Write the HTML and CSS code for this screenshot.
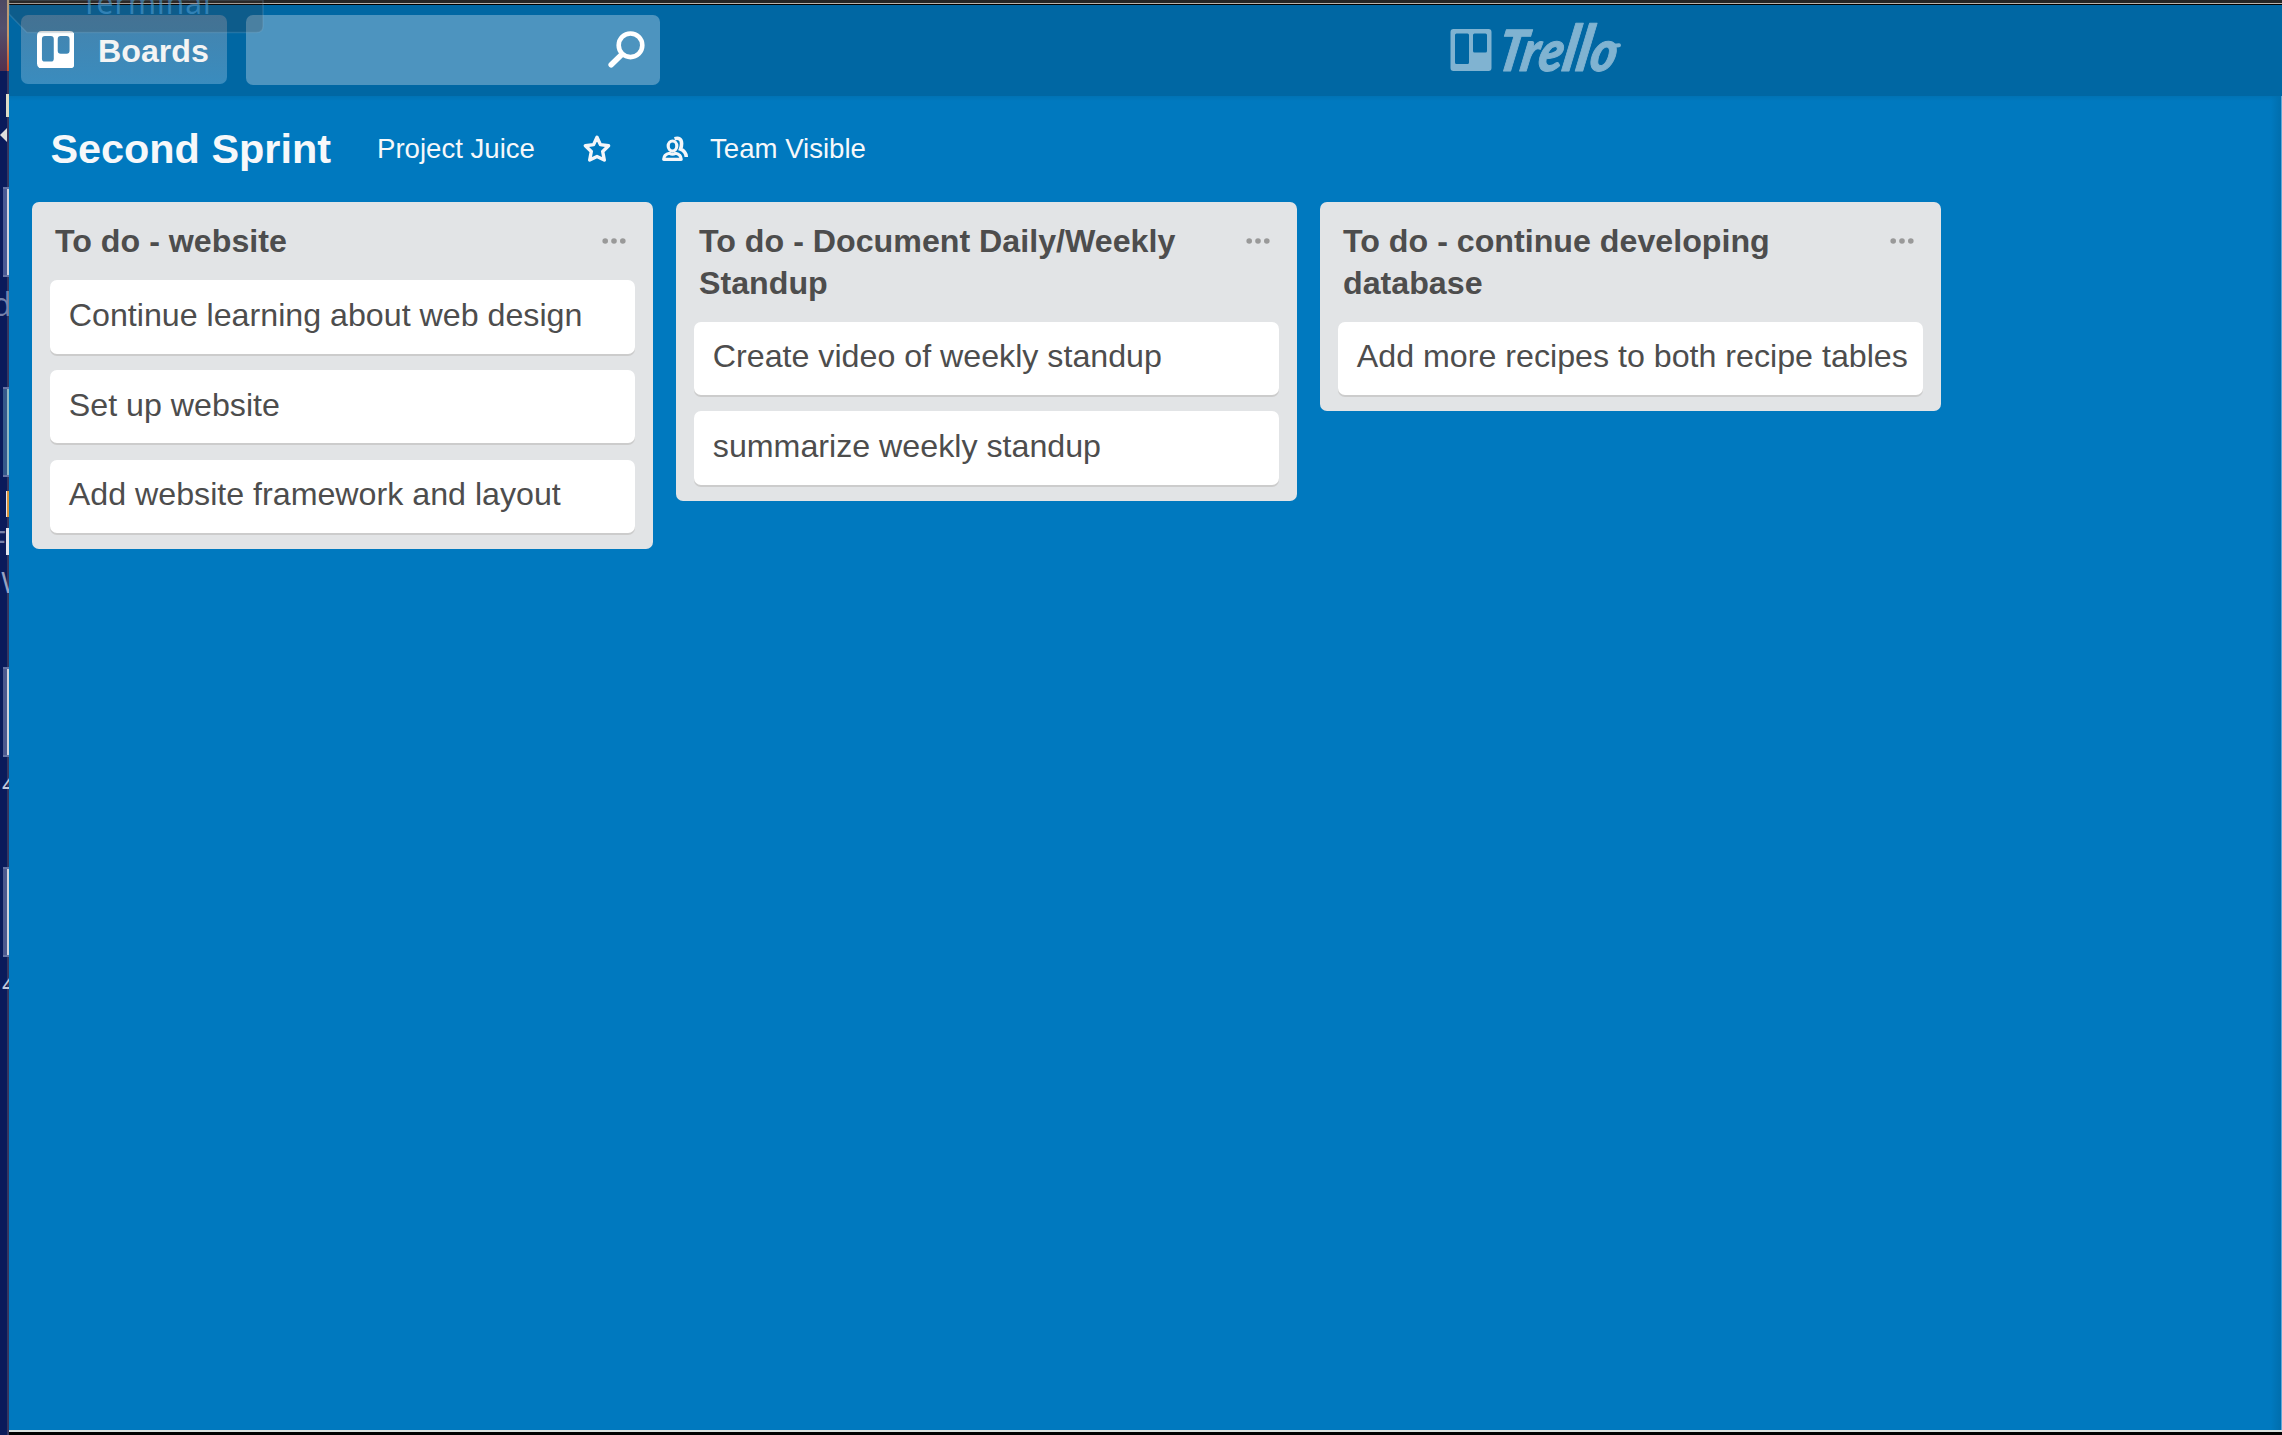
FILE: index.html
```html
<!DOCTYPE html>
<html lang="en">
<head>
<meta charset="utf-8">
<title>Second Sprint | Trello</title>
<link rel="stylesheet" href="styles.css">
</head>
<body>
<div class="screen">
  <aside class="desktop" aria-hidden="true">
    <span class="wallpaper"></span>
    <span class="edge"></span>
    <span class="sliver sliver-cream"></span>
    <span class="arrow"></span>
    <span class="thumb thumb-a"></span>
    <span class="label label-d">d</span>
    <span class="thumb thumb-b"></span>
    <span class="sliver sliver-orange"></span>
    <span class="label label-f">F</span>
    <span class="sliver sliver-white"></span>
    <span class="label label-w">W</span>
    <span class="thumb thumb-c"></span>
    <span class="label label-4">4</span>
    <span class="thumb thumb-d"></span>
    <span class="label label-4b">4</span>
  </aside>

  <div class="window">
    <div class="titlebar"></div>
    <header class="topbar">
      <button class="boards">
        <svg class="boards-icon" viewBox="0 0 38 38"><path fill="#fff" fill-rule="evenodd" d="M5 0H33Q38 0 38 5V33Q38 38 33 38H5Q0 38 0 33V5Q0 0 5 0ZM8 5Q5 5 5 8V28Q5 31 8 31H14Q17 31 17 28V8Q17 5 14 5ZM24 5Q21 5 21 8V20Q21 23 24 23H30Q33 23 33 20V8Q33 5 30 5Z"/></svg>
        <span>Boards</span>
      </button>
      <div class="search">
        <svg class="search-icon" viewBox="0 0 37 37"><circle cx="22.5" cy="14.3" r="11.8" fill="none" stroke="#fff" stroke-width="4.6"/><path d="M13.5 23.8L3.2 33.7" stroke="#fff" stroke-width="5.6" stroke-linecap="round"/></svg>
      </div>
      <svg class="logo" viewBox="0 0 180 60">
        <path fill-rule="evenodd" d="M3.5 9H38.5Q41.500 9 41.500 12V48Q41.500 51 38.500 51H3.500Q.5 51 .5 48V12Q.5 9 3.500 9ZM6.500 13.500Q5 13.500 5 15V42.500Q5 44 6.500 44H17.500Q19 44 19 42.500V15Q19 13.500 17.500 13.500ZM24.500 13.500Q23 13.500 23 15V31Q23 32.500 24.500 32.500H35.500Q37 32.500 37 31V15Q37 13.500 35.500 13.500Z"/>
        <text class="wordmark" transform="translate(45 50.5) skewX(-11)" x="0" y="0" textLength="119" lengthAdjust="spacingAndGlyphs">Tre<tspan class="tall">ll</tspan>o</text>
        <path d="M158 24.500Q162 26 169 25.200" fill="none" stroke="#80b3d1" stroke-width="4" stroke-linecap="round"/>
      </svg>
    </header>

    <main class="board">
      <div class="board-header">
        <h1>Second Sprint</h1>
        <span class="org">Project Juice</span>
        <svg class="star" viewBox="0 0 28 28"><path d="M14 2.300L17.400 9.600L25.600 10.800L19.700 16.500L21.300 25L14 21.400L6.700 25L8.300 16.500L2.400 10.800L10.600 9.600Z" fill="none" stroke="#f4f6f9" stroke-width="3.400" stroke-linejoin="round"/></svg>
        <svg class="people" viewBox="0 0 28 26" fill="none" stroke="#f4f6f9"><ellipse cx="11.500" cy="10" rx="4.300" ry="5" stroke-width="3.200"/><path d="M2.700 23.300Q2.900 18.400 8.600 17.300Q11.500 18.800 14.400 17.300Q20 18.400 20.200 23.300Z" stroke-width="3.200" stroke-linejoin="round"/><path d="M13.500 2.700Q20.400 .8 20.600 7.500Q20.600 10.500 19.500 13.200Q25 15.500 25.300 21" stroke-width="3.600"/></svg>
        <span class="visibility">Team Visible</span>
      </div>

      <div class="lists">
        <section class="list">
          <div class="list-header">
            <h2>To do - website</h2>
            <svg class="menu" viewBox="0 0 24 8"><circle cx="3.200" cy="4" r="2.800"/><circle cx="12" cy="4" r="2.800"/><circle cx="20.800" cy="4" r="2.800"/></svg>
          </div>
          <div class="cards">
            <div class="card">Continue learning about web design</div>
            <div class="card">Set up website</div>
            <div class="card">Add website framework and layout</div>
          </div>
        </section>
        <section class="list">
          <div class="list-header">
            <h2>To do - Document Daily/Weekly Standup</h2>
            <svg class="menu" viewBox="0 0 24 8"><circle cx="3.200" cy="4" r="2.800"/><circle cx="12" cy="4" r="2.800"/><circle cx="20.800" cy="4" r="2.800"/></svg>
          </div>
          <div class="cards">
            <div class="card">Create video of weekly standup</div>
            <div class="card">summarize weekly standup</div>
          </div>
        </section>
        <section class="list">
          <div class="list-header">
            <h2>To do - continue developing database</h2>
            <svg class="menu" viewBox="0 0 24 8"><circle cx="3.200" cy="4" r="2.800"/><circle cx="12" cy="4" r="2.800"/><circle cx="20.800" cy="4" r="2.800"/></svg>
          </div>
          <div class="cards">
            <div class="card">Add more recipes to both recipe tables</div>
          </div>
        </section>
      </div>
    </main>
    <div class="bottom-edge"></div>
  </div>

  <div class="tooltip">
    <svg class="tooltip-shape" viewBox="0 0 255 34"><path d="M0 0H254V26Q254 32.500 247.500 32.500H18L0 14Z" fill="#41342c" fill-opacity=".2" stroke="#8fbcd8" stroke-opacity=".22" stroke-width="1.500"/></svg>
    <span>Terminal</span>
  </div>
</div>
</body>
</html>
```
FILE: styles.css
```css
* { box-sizing: border-box; }

body {
  margin: 0;
  overflow: hidden;
  font-family: "Liberation Sans", Arial, sans-serif;
  background: #000;
}

svg { display: block; flex: none; }
h1, h2 { margin: 0; }

.screen {
  position: relative;
  display: flex;
  width: 2282px;
  height: 1435px;
  overflow: hidden;
}

/* Sliver of the desktop left of the window */
.desktop {
  position: relative;
  flex: none;
  width: 9px;
  overflow: hidden;
  background: linear-gradient(90deg, #0a1b5b 0 7px, #353760 7px);
}
.desktop span { position: absolute; }
.wallpaper { left: 0; top: 0; width: 9px; height: 71px; background: linear-gradient(#4d4a63, #53506d 40%, #54304e); }
.edge { left: 7px; top: 0; width: 2px; height: 71px; background: linear-gradient(#b49c7c, #c79767 50%, #c84f28); }
.sliver { left: 6px; width: 3px; }
.sliver-cream { top: 94px; height: 23px; background: #dedbc6; }
.sliver-orange { top: 491px; height: 26px; background: linear-gradient(90deg, #e7e4ea 1px, #d7943c 1px); }
.sliver-white { top: 528px; height: 27px; background: #e3e5ed; }
.arrow { left: 0; top: 128px; width: 7px; height: 14px; background: #dedede; clip-path: polygon(0 50%, 100% 0, 100% 100%); }
.thumb { left: 3px; width: 6px; border: solid #6674a5; border-width: 2px 0; }
.thumb-a { top: 187px; height: 90px; background: linear-gradient(90deg, #495a94 4px, #d2d3dc 4px); }
.thumb-b { top: 387px; height: 90px; background: linear-gradient(90deg, #35598b 4px, #92b8c2 4px); }
.thumb-c { top: 667px; height: 90px; background: linear-gradient(90deg, #4c598f 4px, #d2d3dc 4px); }
.thumb-d { top: 867px; height: 90px; background: linear-gradient(90deg, #4c598f 4px, #d2d3dc 4px); }
.label { color: #7581aa; font: 30px/30px "Open Sans", sans-serif; }
.label-d { left: -8px; top: 289px; font-size: 32px; }
.label-f { left: -10px; top: 526px; }
.label-w { left: 1px; top: 567px; color: #97a1c1; }
.label-4, .label-4b { left: 2px; color: #c3c9db; font-size: 26px; }
.label-4 { top: 768px; }
.label-4b { top: 968px; }

.window {
  flex: 1;
  display: flex;
  flex-direction: column;
  min-width: 0;
}
.titlebar { height: 5px; background: linear-gradient(#262626 3px, #b9b4ae 3px 4px, #000 4px); }
.bottom-edge { height: 5px; background: linear-gradient(#d9e0de 2px, #000 2px); }

.topbar {
  display: flex;
  height: 91px;
  padding: 10.4px 0 0 12px;
  background: #0067a3;
}
.boards {
  display: flex;
  width: 206px;
  height: 68.6px;
  padding: 0 0 0 15.5px;
  border: 0;
  border-radius: 7px;
  background: linear-gradient(#4583ad, #3a8cbe);
  color: #f4f4f4;
  font: bold 32.2px/47px "Liberation Sans", Arial, sans-serif;
}
.boards span { margin: 12.6px 0 0 24px; }
.boards-icon { width: 37.5px; height: 37.5px; margin-top: 15.6px; }
.search {
  display: flex;
  justify-content: flex-end;
  width: 414px;
  height: 69.6px;
  margin-left: 19px;
  padding: 15.5px 15px 0 0;
  border-radius: 7px;
  background: #4d94bf;
}
.search-icon { width: 37px; height: 37px; }
.logo { width: 180px; height: 60px; margin: 4.6px 0 0 790px; fill: #80b3d1; overflow: visible; }
.wordmark { font: italic 900 57px Lato, sans-serif; stroke: #80b3d1; stroke-width: 1px; stroke-linejoin: round; }
.tall { font-size: 64px; }

.board {
  flex: 1;
  min-height: 0;
  background:
    linear-gradient(90deg, transparent calc(100% - 11px), #006ead calc(100% - 1px), #60a8d8 calc(100% - 1px)),
    linear-gradient(#0073b5, #0079bf 5px);
}
.board-header {
  display: flex;
  align-items: center;
  height: 106px;
  padding: 29.600px 0 30.400px 41.4px;
  color: #f6f8fa;
  font-size: 27.6px;
  line-height: 46px;
  white-space: nowrap;
}
.board-header h1 { width: 326.6px; font-size: 41.4px; line-height: 46px; }
.org { width: 206px; }
.star { width: 28px; height: 28px; }
.people { width: 28px; height: 26px; margin-left: 50px; }
.visibility { margin-left: 21px; }

.lists {
  display: flex;
  align-items: flex-start;
  gap: 23px;
  padding-left: 23px;
}
.list {
  width: 621px;
  padding: 19.4px 18.4px 16.1px;
  border-radius: 7px;
  background: #e2e4e6;
  color: #4d4d4d;
  font-size: 32.2px;
  line-height: 41.4px;
}
.list-header {
  display: flex;
  justify-content: space-between;
  padding: 0 8.400px 17.4px 4.600px;
}
.list-header h2 { width: 500px; font-size: 32.2px; line-height: 41.4px; }
.menu { width: 24px; height: 8px; margin-top: 15.5px; fill: #999; }
.cards { display: flex; flex-direction: column; gap: 16.1px; }
.card {
  height: 73.6px;
  padding: 14.8px 0 0 18.4px;
  border-radius: 7px;
  background: #fff;
  box-shadow: 0 2px 0 #ccc;
  white-space: nowrap;
}

/* Dock tooltip fading out over the corner of the window */
.tooltip {
  position: absolute;
  left: 9px;
  top: 0;
  width: 255px;
  height: 34px;
  overflow: hidden;
}
.tooltip-shape { width: 255px; height: 34px; }
.tooltip span {
  position: absolute;
  left: 72px;
  top: -15px;
  color: rgba(75, 155, 210, .6);
  font: 30px/36px "Noto Sans", sans-serif;
  letter-spacing: 1px;
}
```
